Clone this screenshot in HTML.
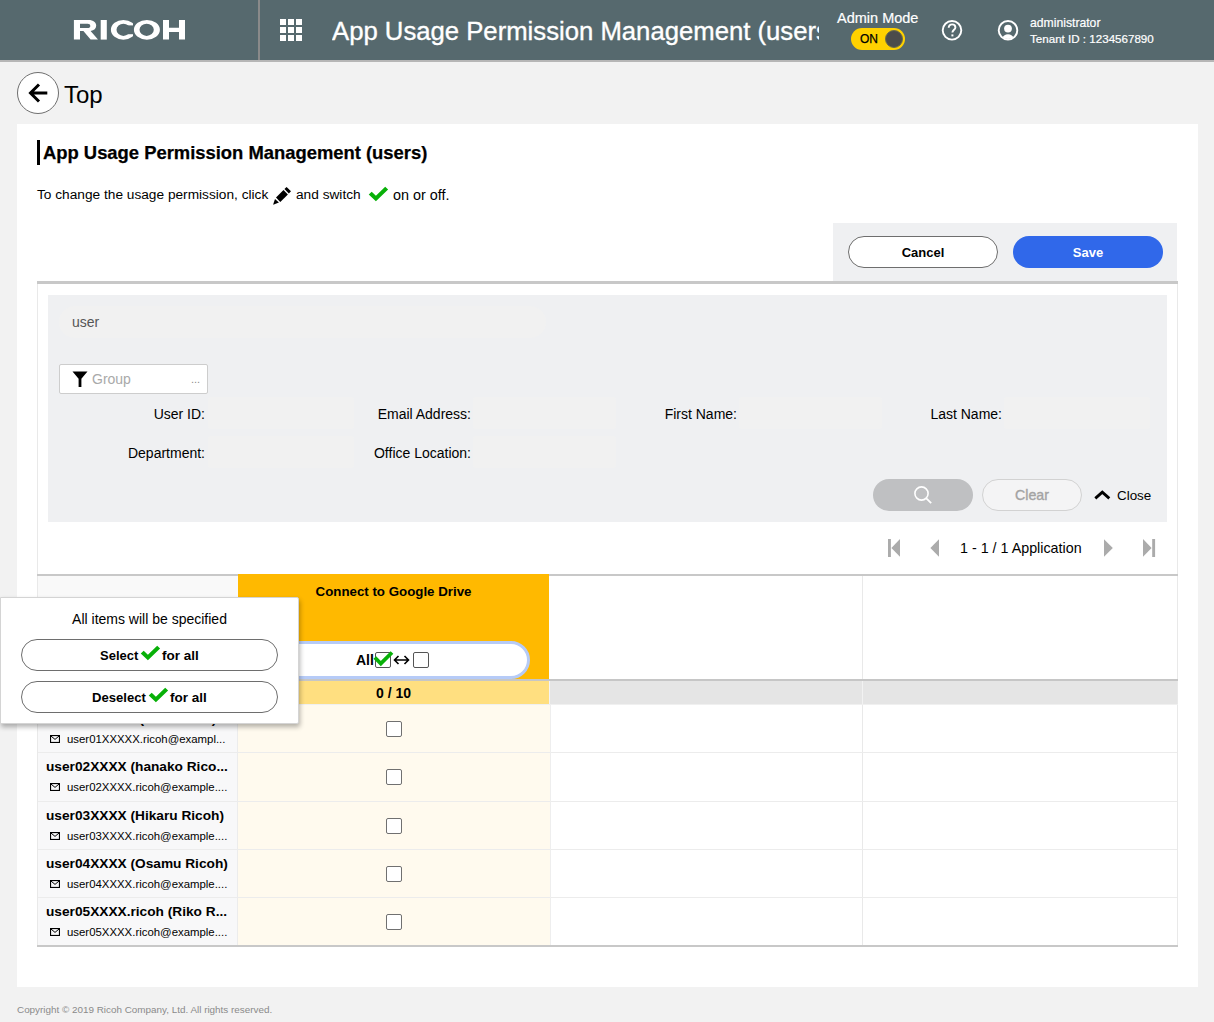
<!DOCTYPE html>
<html><head><meta charset="utf-8">
<style>
*{box-sizing:border-box;margin:0;padding:0}
html,body{width:1214px;height:1022px;overflow:hidden}
body{background:#f2f2f2;font-family:"Liberation Sans",sans-serif;color:#000;position:relative}
.a{position:absolute}
.t{position:absolute;white-space:nowrap;line-height:1}
svg{position:absolute;overflow:visible}
</style></head><body>

<!-- HEADER -->
<div class="a" style="left:0;top:0;width:1214px;height:60px;background:#56696e"></div>
<div class="a" style="left:0;top:59.5px;width:1214px;height:2.5px;background:#b6b6b6"></div>
<svg style="left:73px;top:20px" width="112" height="20" viewBox="0 0 112 20">
<path fill="#fff" fill-rule="evenodd" d="M0.9 0 H15.4 C20.6 0 23.2 2.7 23.2 5.6 C23.2 8.6 21.2 10.6 17.6 11 L25 19.6 H17.6 L10.4 11.1 H7 V19.6 H0.9 Z M7 3.7 H14.6 C16.3 3.7 17.3 4.6 17.3 5.9 C17.3 7.2 16.3 8.1 14.6 8.1 H7 Z"/>
<rect x="27.7" y="0" width="6.1" height="19.6" fill="#fff"/>
<path fill="#fff" fill-rule="evenodd" d="M37.9 9.8 A12.5 9.9 0 1 0 62.9 9.8 A12.5 9.9 0 1 0 37.9 9.8 Z M43.5 9.8 A6.9 6.1 0 1 0 57.3 9.8 A6.9 6.1 0 1 0 43.5 9.8 Z"/>
<rect x="51.5" y="5.4" width="14" height="8.8" fill="#56696e"/>
<rect x="60" y="-1" width="5" height="22" fill="#56696e"/>
<path fill="#fff" fill-rule="evenodd" d="M60.9 9.8 A13 9.9 0 1 0 86.9 9.8 A13 9.9 0 1 0 60.9 9.8 Z M66.5 9.8 A7.15 6.1 0 1 0 80.8 9.8 A7.15 6.1 0 1 0 66.5 9.8 Z"/>
<path fill="#fff" d="M90 0 H96 V7.8 H106 V0 H112 V19.6 H106 V11.9 H96 V19.6 H90 Z"/>
</svg>
<div class="a" style="left:258px;top:0;width:2px;height:60px;background:#8a8a8a"></div>
<svg style="left:280px;top:19px" width="22" height="22">
<g fill="#fff"><rect x="0" y="0" width="6" height="6"/><rect x="8" y="0" width="6" height="6"/><rect x="16" y="0" width="6" height="6"/><rect x="0" y="8" width="6" height="6"/><rect x="8" y="8" width="6" height="6"/><rect x="16" y="8" width="6" height="6"/><rect x="0" y="16" width="6" height="6"/><rect x="8" y="16" width="6" height="6"/><rect x="16" y="16" width="6" height="6"/></g></svg>
<div class="a" style="left:332px;top:0;width:487px;height:59px;overflow:hidden">
<div class="t" id="htitle" style="left:0;top:19px;font-size:25.7px;color:#fff;-webkit-text-stroke:0.35px #fff">App Usage Permission Management (users)</div>
</div>
<div class="t" style="left:837px;top:11px;font-size:14.5px;color:#fff;-webkit-text-stroke:0.2px #fff">Admin Mode</div>
<div class="a" style="left:851px;top:28px;width:54px;height:22px;border-radius:11px;background:#ffd100"></div>
<div class="t" style="left:860px;top:32.5px;font-size:12px;font-weight:400;color:#000;-webkit-text-stroke:0.25px #000">ON</div>
<div class="a" style="left:885px;top:30px;width:18px;height:18px;border-radius:9px;background:#4b4b4b;border:1px solid #6b6b4b"></div>
<svg style="left:941px;top:19px" width="22" height="24" viewBox="0 0 22 24">
<circle cx="11" cy="11.3" r="9.3" fill="none" stroke="#fff" stroke-width="1.9"/>
<path d="M7.7 8.7 C7.7 6.6 9.2 5.4 11.1 5.4 C13 5.4 14.4 6.6 14.4 8.4 C14.4 10.6 11.4 11 11.4 13.6" fill="none" stroke="#fff" stroke-width="1.9"/>
<rect x="10.4" y="15.4" width="2" height="2" fill="#fff"/>
</svg>
<svg style="left:997px;top:19px" width="22" height="24" viewBox="0 0 22 24">
<defs><clipPath id="uc"><circle cx="11" cy="11.3" r="8.6"/></clipPath></defs>
<circle cx="11" cy="11.3" r="9.3" fill="none" stroke="#fff" stroke-width="1.9"/>
<circle cx="11" cy="9.6" r="3.9" fill="#fff"/>
<path clip-path="url(#uc)" d="M3.5 22 C4.8 17.6 7.8 15.2 11 15.2 C14.2 15.2 17.2 17.6 18.5 22 Z" fill="#fff"/>
</svg>
<div class="t" style="left:1030px;top:17px;font-size:12.2px;color:#fff;-webkit-text-stroke:0.2px #fff">administrator</div>
<div class="t" style="left:1030px;top:33px;font-size:11.6px;color:#fff;-webkit-text-stroke:0.2px #fff">Tenant ID : 1234567890</div>

<!-- BACK -->
<div class="a" style="left:17px;top:72px;width:42px;height:42px;border-radius:21px;background:#fff;border:1px solid #6f6f6f"></div>
<svg style="left:17px;top:72px" width="42" height="42" viewBox="0 0 42 42">
<path d="M30.3 21 H13.8 M22 12.5 L13.5 21 L22 29.5" fill="none" stroke="#000" stroke-width="3"/>
</svg>
<div class="t" style="left:64px;top:83px;font-size:24px;color:#000">Top</div>

<!-- CARD -->
<div class="a" style="left:17px;top:124px;width:1181px;height:863px;background:#fff"></div>
<div class="a" style="left:37px;top:140px;width:3px;height:25px;background:#000"></div>
<div class="t" id="title" style="left:43px;top:144px;font-size:18.4px;font-weight:700;-webkit-text-stroke:0.25px #000">App Usage Permission Management (users)</div>
<div class="t" style="left:37px;top:188px;font-size:13.7px">To change the usage permission, click</div>
<svg style="left:272px;top:186px" width="20" height="20" viewBox="0 0 20 20">
<path d="M14.6 0.9 L19 5.3 L16.85 7.45 L12.45 3.05 Z" fill="#000"/>
<path d="M11.5 4 L15.9 8.4 L8.3 15.9 L4 11.6 Z" fill="#000"/>
<path d="M3 13.1 L6.95 16.6 L1.1 18.7 Z" fill="#000"/>
</svg>
<div class="t" style="left:296px;top:188px;font-size:13.7px">and switch</div>
<svg style="left:368px;top:186px" width="21" height="16" viewBox="0 0 21 16">
<path d="M0.75 8.4 L3.7 5.7 L7.9 9.7 L17.2 0.75 L20.1 3.4 L7.9 15.2 Z" fill="#08b008"/>
</svg>
<div class="t" style="left:393px;top:188px;font-size:14.4px">on or off.</div>

<!-- BUTTON BAR -->
<div class="a" style="left:833px;top:223px;width:344px;height:58px;background:#eff0f2"></div>
<div class="a" style="left:848px;top:236px;width:150px;height:32px;border-radius:16px;background:#fff;border:1px solid #6e6e6e"></div>
<div class="t" style="left:848px;top:246px;width:150px;text-align:center;font-size:13px;font-weight:700">Cancel</div>
<div class="a" style="left:1013px;top:236px;width:150px;height:32px;border-radius:16px;background:#3068ea"></div>
<div class="t" style="left:1013px;top:246px;width:150px;text-align:center;font-size:13px;font-weight:700;color:#fff">Save</div>
<div class="a" style="left:37px;top:281px;width:1141px;height:3px;background:#c8c8c8"></div>

<!-- container side borders -->
<div class="a" style="left:37px;top:284px;width:1px;height:662px;background:#e9e9e9"></div>
<div class="a" style="left:1177px;top:284px;width:1px;height:662px;background:#e9e9e9"></div>

<!-- SEARCH PANEL -->
<div class="a" style="left:48px;top:295px;width:1119px;height:227px;background:#eff0f2"></div>
<div class="a" style="left:59px;top:306px;width:487px;height:32px;border-radius:16px;background:#f1f1f1"></div>
<div class="t" style="left:72px;top:315px;font-size:14px;color:#555">user</div>
<div class="a" style="left:59px;top:364px;width:149px;height:30px;background:#fff;border:1px solid #cdcdcd;border-radius:2px"></div>
<svg style="left:72px;top:371px" width="16" height="16" viewBox="0 0 16 16">
<path d="M0.5 0.5 H15.5 L9.4 7.8 V16 H6.6 V7.8 Z" fill="#000"/>
</svg>
<div class="t" style="left:92px;top:372px;font-size:14px;color:#a9a9a9">Group</div>
<div class="t" style="left:191px;top:374px;font-size:11px;color:#8c8c8c">...</div>

<div class="a" style="left:208px;top:397px;width:146px;height:32px;border-radius:3px;background:#f1f1f1"></div>
<div class="a" style="left:473px;top:397px;width:143px;height:32px;border-radius:3px;background:#f1f1f1"></div>
<div class="a" style="left:739px;top:397px;width:143px;height:32px;border-radius:3px;background:#f1f1f1"></div>
<div class="a" style="left:1004px;top:397px;width:146px;height:32px;border-radius:3px;background:#f1f1f1"></div>
<div class="a" style="left:208px;top:436px;width:146px;height:32px;border-radius:3px;background:#f1f1f1"></div>
<div class="a" style="left:473px;top:436px;width:143px;height:32px;border-radius:3px;background:#f1f1f1"></div>
<div class="t" style="left:0;top:407px;width:205px;text-align:right;font-size:14px">User ID:</div>
<div class="t" style="left:0;top:407px;width:471px;text-align:right;font-size:14px">Email Address:</div>
<div class="t" style="left:0;top:407px;width:737px;text-align:right;font-size:14px">First Name:</div>
<div class="t" style="left:0;top:407px;width:1002px;text-align:right;font-size:14px">Last Name:</div>
<div class="t" style="left:0;top:446px;width:205px;text-align:right;font-size:14px">Department:</div>
<div class="t" style="left:0;top:446px;width:471px;text-align:right;font-size:14px">Office Location:</div>

<div class="a" style="left:873px;top:479px;width:100px;height:32px;border-radius:16px;background:#bfc0c2"></div>
<svg style="left:913px;top:485px" width="20" height="20" viewBox="0 0 20 20">
<circle cx="8.5" cy="8.5" r="6.6" fill="none" stroke="#fff" stroke-width="1.6"/>
<path d="M13.3 13.3 L18.2 18.2" stroke="#fff" stroke-width="1.8"/>
</svg>
<div class="a" style="left:982px;top:479px;width:100px;height:32px;border-radius:16px;background:#f4f4f5;border:1px solid #d2d2d2"></div>
<div class="t" style="left:982px;top:488px;width:100px;text-align:center;font-size:14.2px;font-weight:400;color:#a3a3a3;-webkit-text-stroke:0.35px #a3a3a3">Clear</div>
<svg style="left:1093px;top:489px" width="18" height="12" viewBox="0 0 18 12">
<path d="M2.3 9.3 L9.3 3.2 L16.3 9.3" fill="none" stroke="#000" stroke-width="2.9"/>
</svg>
<div class="t" style="left:1117px;top:489px;font-size:13.4px">Close</div>

<!-- PAGINATION -->
<svg style="left:887px;top:538px" width="16" height="20" viewBox="0 0 16 20">
<rect x="1" y="1" width="2.9" height="18" fill="#ababab"/>
<path d="M13 1 V18.8 L4.4 9.9 Z" fill="#ababab"/>
</svg>
<svg style="left:929px;top:538px" width="12" height="20" viewBox="0 0 12 20">
<path d="M10 1.3 V18.7 L1.4 10 Z" fill="#ababab"/>
</svg>
<div class="t" style="left:960px;top:541px;font-size:14.3px">1 - 1 / 1 Application</div>
<svg style="left:1103px;top:538px" width="12" height="20" viewBox="0 0 12 20">
<path d="M1 1.3 V18.7 L9.8 10 Z" fill="#ababab"/>
</svg>
<svg style="left:1141px;top:538px" width="16" height="20" viewBox="0 0 16 20">
<path d="M2 1 V18.8 L10.6 9.9 Z" fill="#ababab"/>
<rect x="11.2" y="1" width="2.9" height="18" fill="#ababab"/>
</svg>

<!-- TABLE -->
<div class="a" style="left:37px;top:574px;width:1141px;height:2px;background:#c8c8c8"></div>
<div class="a" style="left:38px;top:576px;width:200px;height:103px;background:#f9f9f9"></div>
<div class="a" style="left:238px;top:574px;width:311px;height:105px;background:#ffb900"></div>
<div class="t" style="left:238px;top:585px;width:311px;text-align:center;font-size:13.3px;font-weight:700">Connect to Google Drive</div>
<div class="a" style="left:862px;top:576px;width:1px;height:369px;background:#e9e9e9"></div>
<div class="a" style="left:37px;top:679px;width:1141px;height:2px;background:#c6c6c6"></div>
<div class="a" style="left:38px;top:681px;width:200px;height:23px;background:#e5e5e5"></div>
<div class="a" style="left:238px;top:681px;width:311px;height:23px;background:#ffdf80"></div>
<div class="a" style="left:550px;top:681px;width:627px;height:23px;background:#e5e5e5"></div>
<div class="a" style="left:549px;top:681px;width:1px;height:23px;background:#f4f4f6"></div>
<div class="a" style="left:862px;top:681px;width:1px;height:23px;background:#f2f2f2"></div>
<div class="t" style="left:238px;top:686px;width:311px;text-align:center;font-size:14px;font-weight:700">0 / 10</div>

<!-- All pill -->
<div class="a" style="left:257px;top:641px;width:273px;height:38px;border-radius:19px;background:#fff;border:3px solid #b6cbf7"></div>
<div class="t" style="left:356px;top:653px;font-size:14px;font-weight:700">All</div>
<div class="a" style="left:375px;top:652px;width:16px;height:16px;border:1px solid #555;border-radius:2px;background:#fff"></div>
<svg style="left:373px;top:650px" width="20" height="16" viewBox="0 0 20 16">
<path d="M1.8 7.5 L7.8 13.5 L19 2.5" fill="none" stroke="#08b008" stroke-width="3.8"/>
</svg>
<svg style="left:393px;top:653px" width="17" height="14" viewBox="0 0 17 14">
<path d="M1.5 7 H15.5 M5.5 3 L1.5 7 L5.5 11 M11.5 3 L15.5 7 L11.5 11" fill="none" stroke="#000" stroke-width="1.6"/>
</svg>
<div class="a" style="left:413px;top:652px;width:16px;height:16px;border:1px solid #555;border-radius:2px;background:#fff"></div>

<!-- rows -->
<div class="a" style="left:38px;top:704px;width:199px;height:48px;background:#f8f8f9"></div>
<div class="a" style="left:238px;top:704px;width:312px;height:48px;background:#fffaee"></div>
<div class="t" style="left:46px;top:712px;font-size:13.7px;font-weight:700">user01XXXXX (taro Ricoh)</div>
<svg style="left:50px;top:735px" width="10" height="8" viewBox="0 0 10 8"><rect x="0.55" y="0.55" width="8.9" height="6.9" fill="none" stroke="#000" stroke-width="1.1"/><path d="M0.8 0.9 L5 4.4 L9.2 0.9" fill="none" stroke="#000" stroke-width="1"/></svg>
<div class="t" style="left:67px;top:734px;font-size:11.4px">user01XXXXX.ricoh@exampl...</div>
<div class="a" style="left:386px;top:721px;width:16px;height:16px;border:1px solid #707070;border-radius:2px;background:#fff"></div>
<div class="a" style="left:38px;top:752px;width:199px;height:49px;background:#f8f8f9"></div>
<div class="a" style="left:238px;top:752px;width:312px;height:49px;background:#fffaee"></div>
<div class="t" style="left:46px;top:760px;font-size:13.7px;font-weight:700">user02XXXX (hanako Rico...</div>
<svg style="left:50px;top:783px" width="10" height="8" viewBox="0 0 10 8"><rect x="0.55" y="0.55" width="8.9" height="6.9" fill="none" stroke="#000" stroke-width="1.1"/><path d="M0.8 0.9 L5 4.4 L9.2 0.9" fill="none" stroke="#000" stroke-width="1"/></svg>
<div class="t" style="left:67px;top:782px;font-size:11.4px">user02XXXX.ricoh@example....</div>
<div class="a" style="left:386px;top:769px;width:16px;height:16px;border:1px solid #707070;border-radius:2px;background:#fff"></div>
<div class="a" style="left:38px;top:752px;width:1139px;height:1px;background:#ececec"></div>
<div class="a" style="left:38px;top:801px;width:199px;height:48px;background:#f8f8f9"></div>
<div class="a" style="left:238px;top:801px;width:312px;height:48px;background:#fffaee"></div>
<div class="t" style="left:46px;top:809px;font-size:13.7px;font-weight:700">user03XXXX (Hikaru Ricoh)</div>
<svg style="left:50px;top:832px" width="10" height="8" viewBox="0 0 10 8"><rect x="0.55" y="0.55" width="8.9" height="6.9" fill="none" stroke="#000" stroke-width="1.1"/><path d="M0.8 0.9 L5 4.4 L9.2 0.9" fill="none" stroke="#000" stroke-width="1"/></svg>
<div class="t" style="left:67px;top:831px;font-size:11.4px">user03XXXX.ricoh@example....</div>
<div class="a" style="left:386px;top:818px;width:16px;height:16px;border:1px solid #707070;border-radius:2px;background:#fff"></div>
<div class="a" style="left:38px;top:801px;width:1139px;height:1px;background:#ececec"></div>
<div class="a" style="left:38px;top:849px;width:199px;height:48px;background:#f8f8f9"></div>
<div class="a" style="left:238px;top:849px;width:312px;height:48px;background:#fffaee"></div>
<div class="t" style="left:46px;top:857px;font-size:13.7px;font-weight:700">user04XXXX (Osamu Ricoh)</div>
<svg style="left:50px;top:880px" width="10" height="8" viewBox="0 0 10 8"><rect x="0.55" y="0.55" width="8.9" height="6.9" fill="none" stroke="#000" stroke-width="1.1"/><path d="M0.8 0.9 L5 4.4 L9.2 0.9" fill="none" stroke="#000" stroke-width="1"/></svg>
<div class="t" style="left:67px;top:879px;font-size:11.4px">user04XXXX.ricoh@example....</div>
<div class="a" style="left:386px;top:866px;width:16px;height:16px;border:1px solid #707070;border-radius:2px;background:#fff"></div>
<div class="a" style="left:38px;top:849px;width:1139px;height:1px;background:#ececec"></div>
<div class="a" style="left:38px;top:897px;width:199px;height:48px;background:#f8f8f9"></div>
<div class="a" style="left:238px;top:897px;width:312px;height:48px;background:#fffaee"></div>
<div class="t" style="left:46px;top:905px;font-size:13.7px;font-weight:700">user05XXXX.ricoh (Riko R...</div>
<svg style="left:50px;top:928px" width="10" height="8" viewBox="0 0 10 8"><rect x="0.55" y="0.55" width="8.9" height="6.9" fill="none" stroke="#000" stroke-width="1.1"/><path d="M0.8 0.9 L5 4.4 L9.2 0.9" fill="none" stroke="#000" stroke-width="1"/></svg>
<div class="t" style="left:67px;top:927px;font-size:11.4px">user05XXXX.ricoh@example....</div>
<div class="a" style="left:386px;top:914px;width:16px;height:16px;border:1px solid #707070;border-radius:2px;background:#fff"></div>
<div class="a" style="left:38px;top:897px;width:1139px;height:1px;background:#ececec"></div>
<div class="a" style="left:237px;top:704px;width:1px;height:241px;background:#ececec"></div>
<div class="a" style="left:550px;top:704px;width:1px;height:241px;background:#eeeeee"></div>
<div class="a" style="left:37px;top:704px;width:1141px;height:1px;background:#f0f0f0"></div>
<div class="a" style="left:37px;top:945px;width:1141px;height:2px;background:#c8c8c8"></div>
<div class="a" style="left:0;top:597px;width:299px;height:127px;background:#fff;border:1px solid #d4d4d4;border-radius:0 2px 2px 0;box-shadow:1px 3px 5px rgba(0,0,0,0.3)"></div>
<div class="t" style="left:0;top:612px;width:299px;text-align:center;font-size:14px">All items will be specified</div>
<div class="a" style="left:21px;top:639px;width:257px;height:32px;border-radius:16px;border:1px solid #6e6e6e;background:#fff"></div>
<div class="t" style="left:100px;top:649px;font-size:13px;font-weight:700">Select</div>
<svg style="left:140px;top:645px" width="21" height="16" viewBox="0 0 21 16"><path d="M0.75 8.4 L3.7 5.7 L7.9 9.7 L17.2 0.75 L20.1 3.4 L7.9 15.2 Z" fill="#08b008"/></svg>
<div class="t" style="left:162px;top:649px;font-size:13.5px;font-weight:700">for all</div>
<div class="a" style="left:21px;top:681px;width:257px;height:32px;border-radius:16px;border:1px solid #6e6e6e;background:#fff"></div>
<div class="t" style="left:92px;top:691px;font-size:13.1px;font-weight:700">Deselect</div>
<svg style="left:148px;top:687px" width="21" height="16" viewBox="0 0 21 16"><path d="M0.75 8.4 L3.7 5.7 L7.9 9.7 L17.2 0.75 L20.1 3.4 L7.9 15.2 Z" fill="#08b008"/></svg>
<div class="t" style="left:170px;top:691px;font-size:13.5px;font-weight:700">for all</div>
<div class="t" style="left:17px;top:1005px;font-size:9.9px;color:#8a8a8a">Copyright © 2019 Ricoh Company, Ltd. All rights reserved.</div>
</body></html>
